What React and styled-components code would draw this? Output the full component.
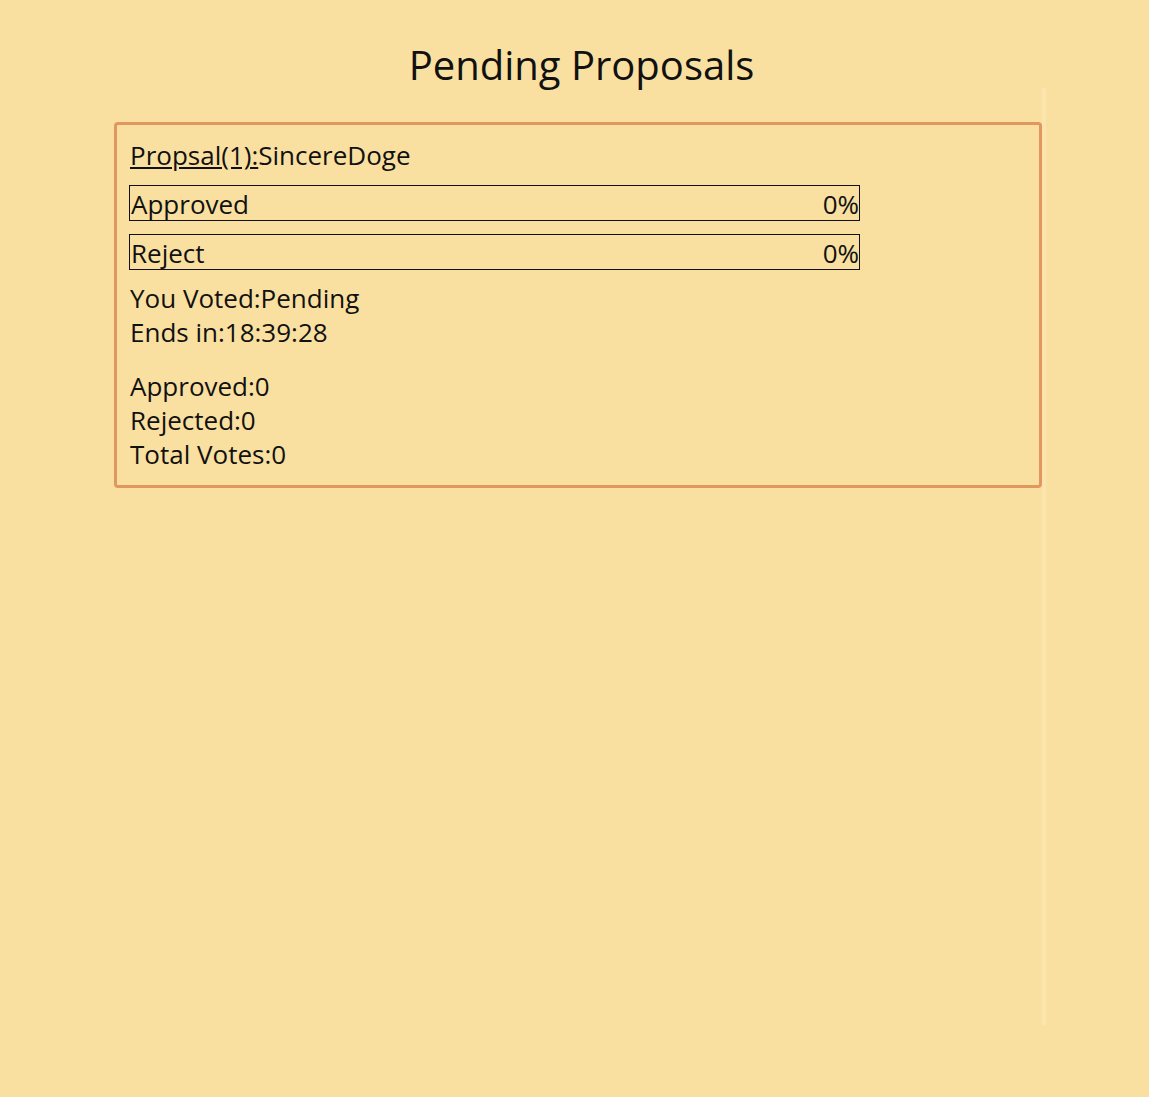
import React from 'react';
import styled, { createGlobalStyle } from 'styled-components';

const GlobalStyle = createGlobalStyle`
  html, body {
    margin: 0;
    padding: 0;
    background-color: #fae0a0;
  }

  body {
    font-family: 'Open Sans', 'Noto Sans', sans-serif;
    color: #111;
  }
`;

const Page = styled.div`
  min-height: 1097px;
  padding: 39px 0 0;
  box-sizing: border-box;
  display: flex;
  flex-direction: column;
  align-items: center;
`;

const Title = styled.h1`
  margin: 0 0 -3px 14px;
  font-size: 40px;
  font-weight: 400;
  line-height: 52px;
`;

const Column = styled.div`
  width: 932px;
  min-height: 937px;
  padding-top: 34px;
  margin-left: 11px;
  box-sizing: border-box;
  border-right: 4px solid rgba(255, 245, 215, 0.22);
`;

const Card = styled.div`
  width: 928px;
  box-sizing: border-box;
  border: 3px solid #e0985e;
  border-radius: 4px;
  padding: 13px 13px 14px 12px;
  font-size: 26px;
  line-height: 34px;
`;

const Heading = styled.div`
  margin-bottom: 13px;
  padding-left: 1px;
`;

const Link = styled.a`
  color: inherit;
  text-decoration: underline;
`;

const Bar = styled.div`
  width: 731px;
  height: 36px;
  box-sizing: border-box;
  border: 1px solid #111;
  display: flex;
  justify-content: space-between;
  align-items: center;
  padding: 2px 0 0 1px;
  margin-bottom: 13px;
`;

const Info = styled.div`
  padding-left: 1px;
  margin-top: ${(p) => p.lift || 0}px;
  margin-bottom: ${(p) => p.gap || 0}px;
`;

const VoteBar = ({ label, percent }) => (
  <Bar>
    <span>{label}</span>
    <span>{percent}%</span>
  </Bar>
);

const App = () => (
  <>
    <GlobalStyle />
    <Page>
      <Title>Pending Proposals</Title>
      <Column>
        <Card>
          <Heading>
            <Link>Propsal(1):</Link>SincereDoge
          </Heading>
          <VoteBar label="Approved" percent={0} />
          <VoteBar label="Reject" percent={0} />
          <Info lift={-2} gap={20}>
            You Voted:Pending
            <br />
            Ends in:18:39:28
          </Info>
          <Info>
            Approved:0
            <br />
            Rejected:0
            <br />
            Total Votes:0
          </Info>
        </Card>
      </Column>
    </Page>
  </>
);

export default App;
